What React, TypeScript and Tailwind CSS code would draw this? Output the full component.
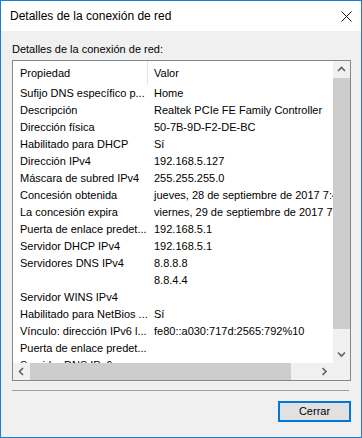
import React from "react";

const rows: [string, string][] = [
  ["Sufijo DNS específico p...", "Home"],
  ["Descripción", "Realtek PCIe FE Family Controller"],
  ["Dirección física", "50-7B-9D-F2-DE-BC"],
  ["Habilitado para DHCP", "Sí"],
  ["Dirección IPv4", "192.168.5.127"],
  ["Máscara de subred IPv4", "255.255.255.0"],
  ["Concesión obtenida", "jueves, 28 de septiembre de 2017 7:45:12"],
  ["La concesión expira", "viernes, 29 de septiembre de 2017 7:45:12"],
  ["Puerta de enlace predet...", "192.168.5.1"],
  ["Servidor DHCP IPv4", "192.168.5.1"],
  ["Servidores DNS IPv4", "8.8.8.8"],
  ["", "8.8.4.4"],
  ["Servidor WINS IPv4", ""],
  ["Habilitado para NetBios ...", "Sí"],
  ["Vínculo: dirección IPv6 l...", "fe80::a030:717d:2565:792%10"],
  ["Puerta de enlace predet...", ""],
  ["Servidor DNS IPv6", ""],
];

const Chevron = ({ dir }: { dir: "up" | "down" | "left" | "right" }) => {
  const pts = {
    up: "1,5 4.5,1.5 8,5",
    down: "1,1.5 4.5,5 8,1.5",
    left: "5,1 1.5,4.5 5,8",
    right: "1.5,1 5,4.5 1.5,8",
  }[dir];
  const vertical = dir === "up" || dir === "down";
  return (
    <svg
      width={vertical ? 9 : 7}
      height={vertical ? 7 : 9}
      viewBox={vertical ? "0 0 9 7" : "0 0 7 9"}
    >
      <polyline points={pts} fill="none" stroke="#606060" strokeWidth="1.6" />
    </svg>
  );
};

export default function App() {
  return (
    <div
      className="flex h-[438px] w-[362px] flex-col border border-[#1a7fd4] bg-[#f0f0f0] text-[11px] text-black"
      style={{ fontFamily: '"Segoe UI", "Liberation Sans", Arial, sans-serif' }}
    >
      {/* title bar */}
      <div className="flex h-[30px] shrink-0 items-center justify-between bg-white pl-[9px] pr-[9px]">
        <span className="text-[12px]">Detalles de la conexión de red</span>
        <svg width="11" height="11" viewBox="0 0 11 11">
          <path d="M0.5 0.5 L10.5 10.5 M10.5 0.5 L0.5 10.5" stroke="#111" strokeWidth="1" />
        </svg>
      </div>

      <div className="flex flex-1 flex-col pl-[11px] pr-[10px] pt-[11px]">
        <div className="h-[15px] leading-[15px]">Detalles de la conexión de red:</div>

        {/* list view */}
        <div className="mt-[3px] grid h-[321px] grid-cols-[1fr_17px] grid-rows-[1fr_17px] border border-[#828790] bg-white">
          <div className="overflow-hidden">
            <div className="flex h-[24px] items-center">
              <div className="flex h-full w-[135px] items-center border-r border-[#e5e5e5] pl-[7px]">
                Propiedad
              </div>
              <div className="pl-[6px]">Valor</div>
            </div>
            {rows.map(([k, v], i) => (
              <div key={i} className="flex h-[17px] items-center whitespace-nowrap">
                <div className="w-[135px] shrink-0 overflow-hidden pl-[7px]">{k}</div>
                <div className="pl-[6px]">{v}</div>
              </div>
            ))}
          </div>

          {/* vertical scrollbar */}
          <div className="flex flex-col bg-[#f0f0f0]">
            <div className="flex h-[17px] items-center justify-center">
              <Chevron dir="up" />
            </div>
            <div className="h-[251px] bg-[#cdcdcd]" />
            <div className="flex-1" />
            <div className="flex h-[17px] items-center justify-center">
              <Chevron dir="down" />
            </div>
          </div>

          {/* horizontal scrollbar */}
          <div className="flex bg-[#f0f0f0]">
            <div className="flex w-[17px] items-center justify-center">
              <Chevron dir="left" />
            </div>
            <div className="w-[261px] bg-[#cdcdcd]" />
            <div className="flex-1" />
            <div className="flex w-[17px] items-center justify-center">
              <Chevron dir="right" />
            </div>
          </div>
          <div className="bg-[#f0f0f0]" />
        </div>

        <div className="mr-[2px] mt-[9px] h-px bg-[#a0a0a0]" />

        <div className="mt-[10px] flex justify-end">
          <button className="flex h-[21px] w-[73px] items-center justify-center border-2 border-[#0078d7] bg-[#e1e1e1] text-[11px]">
            Cerrar
          </button>
        </div>
      </div>
    </div>
  );
}
